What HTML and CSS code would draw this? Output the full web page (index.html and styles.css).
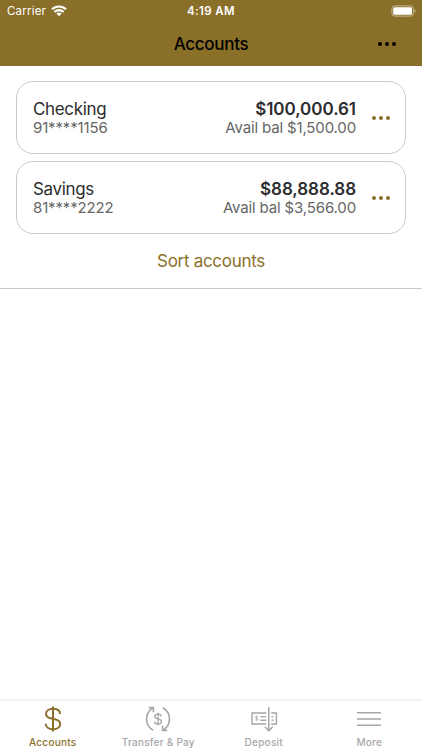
FILE: index.html
```html
<!DOCTYPE html>
<html lang="en">
    <head>
        <meta charset="utf-8">
        <title>Accounts</title>
        <link rel="stylesheet" href="styles.css">
    </head>
    <body>
        <header>
            <div class="status-bar">
                <div class="carrier">
                    <span>Carrier</span>
                    <svg width="16" height="12" viewBox="0 0 16 12" fill="none" stroke="#fff" stroke-width="2.1">
                        <path d="M1 4.3a10 10 0 0 1 14 0"/>
                        <path d="M3.4 7a6.6 6.6 0 0 1 9.2 0"/>
                        <path d="M8 11.2L5.5 8.8a3.6 3.6 0 0 1 5 0z" fill="#fff" stroke="none"/>
                    </svg>
                </div>
                <div class="time">4:19 AM</div>
                <svg class="battery" width="26" height="12" viewBox="0 0 26 12">
                    <rect x=".9" y=".9" width="21.4" height="10.2" rx="2.8" fill="none" stroke="#c9bb98"/>
                    <rect x="2.2" y="2.2" width="18.8" height="7.6" rx="1.5" fill="#fff"/>
                    <path d="M23.6 4.2a2 2 0 0 1 0 3.6z" fill="#c9bb98"/>
                </svg>
            </div>
            <div class="title-bar">
                <h1>Accounts</h1>
                <button type="button" class="dots" aria-label="Options">
                    <span></span><span></span><span></span>
                </button>
            </div>
        </header>
        <main>
            <section class="accounts">
                <div class="card">
                    <div class="account">
                        <div class="name">Checking</div>
                        <div class="number">91****1156</div>
                    </div>
                    <div class="balance">
                        <div class="total">$100,000.61</div>
                        <div class="available">Avail bal $1,500.00</div>
                    </div>
                    <button type="button" class="dots" aria-label="Checking options">
                        <span></span><span></span><span></span>
                    </button>
                </div>
                <div class="card">
                    <div class="account">
                        <div class="name">Savings</div>
                        <div class="number">81****2222</div>
                    </div>
                    <div class="balance">
                        <div class="total">$88,888.88</div>
                        <div class="available">Avail bal $3,566.00</div>
                    </div>
                    <button type="button" class="dots" aria-label="Savings options">
                        <span></span><span></span><span></span>
                    </button>
                </div>
                <a href="#" class="sort">Sort accounts</a>
            </section>
        </main>
        <nav class="tabs">
            <a href="#" class="tab active">
                <svg width="28" height="28" viewBox="0 0 28 28" stroke-width="2">
                    <path d="M14 1.5v25"/>
                    <path d="M21 9c0-3.2-2.8-5.2-7-5.2S7 5.8 7 8.9c0 3 2.2 4.1 7 4.9s7.2 2 7.2 5.2-3 5.2-7.2 5.2-7.3-2-7.3-5.4"/>
                </svg>
                <span>Accounts</span>
            </a>
            <a href="#" class="tab">
                <svg width="28" height="28" viewBox="0 0 28 28" stroke-width="1.6">
                    <path d="M9.3 25.2C.5 20.5.2 8 9 2.7"/>
                    <path d="M4.8 2.6h4.6v4.6"/>
                    <path d="M18.7 2.8C27.5 7.5 27.8 20 19 25.3"/>
                    <path d="M23.2 25.4h-4.6v-4.6"/>
                    <g stroke-width="1.3">
                        <path d="M14 7.8v12.4"/>
                        <path d="M17.3 11.5c0-1.5-1.3-2.4-3.3-2.4s-3.3.9-3.3 2.4c0 1.4 1 2 3.3 2.4s3.4 1 3.4 2.6-1.4 2.5-3.4 2.5-3.4-1-3.4-2.6"/>
                    </g>
                </svg>
                <span>Transfer &amp; Pay</span>
            </a>
            <a href="#" class="tab">
                <svg width="28" height="28" viewBox="0 0 28 28" stroke-width="1.4">
                    <path d="M16.3 8H2v11h14.3"/>
                    <path d="M21.2 8h5.2v11h-5.2"/>
                    <path d="M10.3 11.6h6M10.3 15.2h6M21.5 11.6h2M21.5 15.2h2"/>
                    <path d="M18.8 2.3v23.5M14.8 21.8l4 4 4-4" stroke-width="1.5"/>
                    <path d="M7.8 11.7c-.3-.5-2.5-.6-2.5.5s2.7.8 2.7 2-2.5 1.1-2.9.4M6.6 10.6v5.2" stroke-width=".8"/>
                </svg>
                <span>Deposit</span>
            </a>
            <a href="#" class="tab">
                <svg width="28" height="28" viewBox="0 0 28 28" stroke-width="1.5">
                    <path d="M2 7.8h24M2 14.1h24M2 20.2h24"/>
                </svg>
                <span>More</span>
            </a>
        </nav>
    </body>
</html>
```

FILE: styles.css
```css
:root {
    --gold: #8a6f29;
    --text: #2c2c2e;
    --muted: #666;
    --line: #cbcbcd;
    --tab: #a7a7a9;
}

*, *::before, *::after {
    box-sizing: border-box;
}

body {
    display: flex;
    flex-direction: column;
    height: 100vh;
    margin: 0;
    background-color: #fff;
    color: var(--text);
    font-family: Inter, "Liberation Sans", sans-serif;
}

a {
    text-decoration: none;
}

header {
    height: 66px;
    background-color: var(--gold);
}

.status-bar {
    display: grid;
    grid-template-columns: 1fr auto 1fr;
    align-items: center;
    height: 22px;
    padding: 0 5px 0 7px;
    color: #fff;
    font-size: 11.5px;
}

.carrier {
    display: flex;
    align-items: center;
    gap: 5px;
    letter-spacing: 0.2px;
}

.time {
    margin-right: 2px;
    font-weight: 600;
    letter-spacing: 0.4px;
}

.battery {
    justify-self: end;
}

.title-bar {
    display: grid;
    grid-template-columns: 1fr auto 1fr;
    align-items: center;
    height: 43px;
    padding: 0 26px;
    color: #000;
}

.title-bar h1 {
    grid-column: 2;
    margin: 0;
    font-size: 17px;
    font-weight: 500;
    letter-spacing: -0.3px;
}

.title-bar .dots {
    justify-self: end;
}

.dots {
    display: flex;
    gap: 3px;
    padding: 0;
    border: 0;
    background: none;
    color: inherit;
}

.dots span {
    width: 4px;
    height: 4px;
    border-radius: 50%;
    background-color: currentColor;
}

main {
    flex: 1;
}

.accounts {
    display: flex;
    flex-direction: column;
    gap: 7px;
    height: 223px;
    padding: 15px 16px 0;
    border-bottom: 1px solid var(--line);
}

.card {
    display: flex;
    align-items: center;
    height: 73px;
    padding: 0 15px 0 16px;
    border: 1px solid var(--line);
    border-radius: 17px;
}

.card .dots {
    margin-left: 16px;
    color: var(--gold);
}

.account, .balance {
    padding-top: 1px;
}

.balance {
    margin-left: auto;
    text-align: right;
}

.name, .total {
    font-size: 17px;
    line-height: 20px;
}

.name {
    letter-spacing: -0.35px;
}

.total {
    font-weight: 600;
    letter-spacing: -0.05px;
}

.number, .available {
    color: var(--muted);
    font-size: 15px;
    line-height: 18px;
    letter-spacing: -0.15px;
}

.sort {
    margin-top: 9px;
    color: var(--gold);
    font-size: 17px;
    line-height: 22px;
    letter-spacing: -0.3px;
    text-align: center;
}

.tabs {
    display: grid;
    grid-template-columns: repeat(4, 1fr);
    height: 51px;
    border-top: 2px solid #f3f3f3;
}

.tab {
    display: flex;
    flex-direction: column;
    align-items: center;
    padding-top: 4px;
    color: var(--tab);
    font-size: 10px;
    font-weight: 500;
    line-height: 18px;
    letter-spacing: 0.25px;
}

.tab svg {
    fill: none;
    stroke: currentColor;
}

.tab.active {
    color: var(--gold);
}
```
